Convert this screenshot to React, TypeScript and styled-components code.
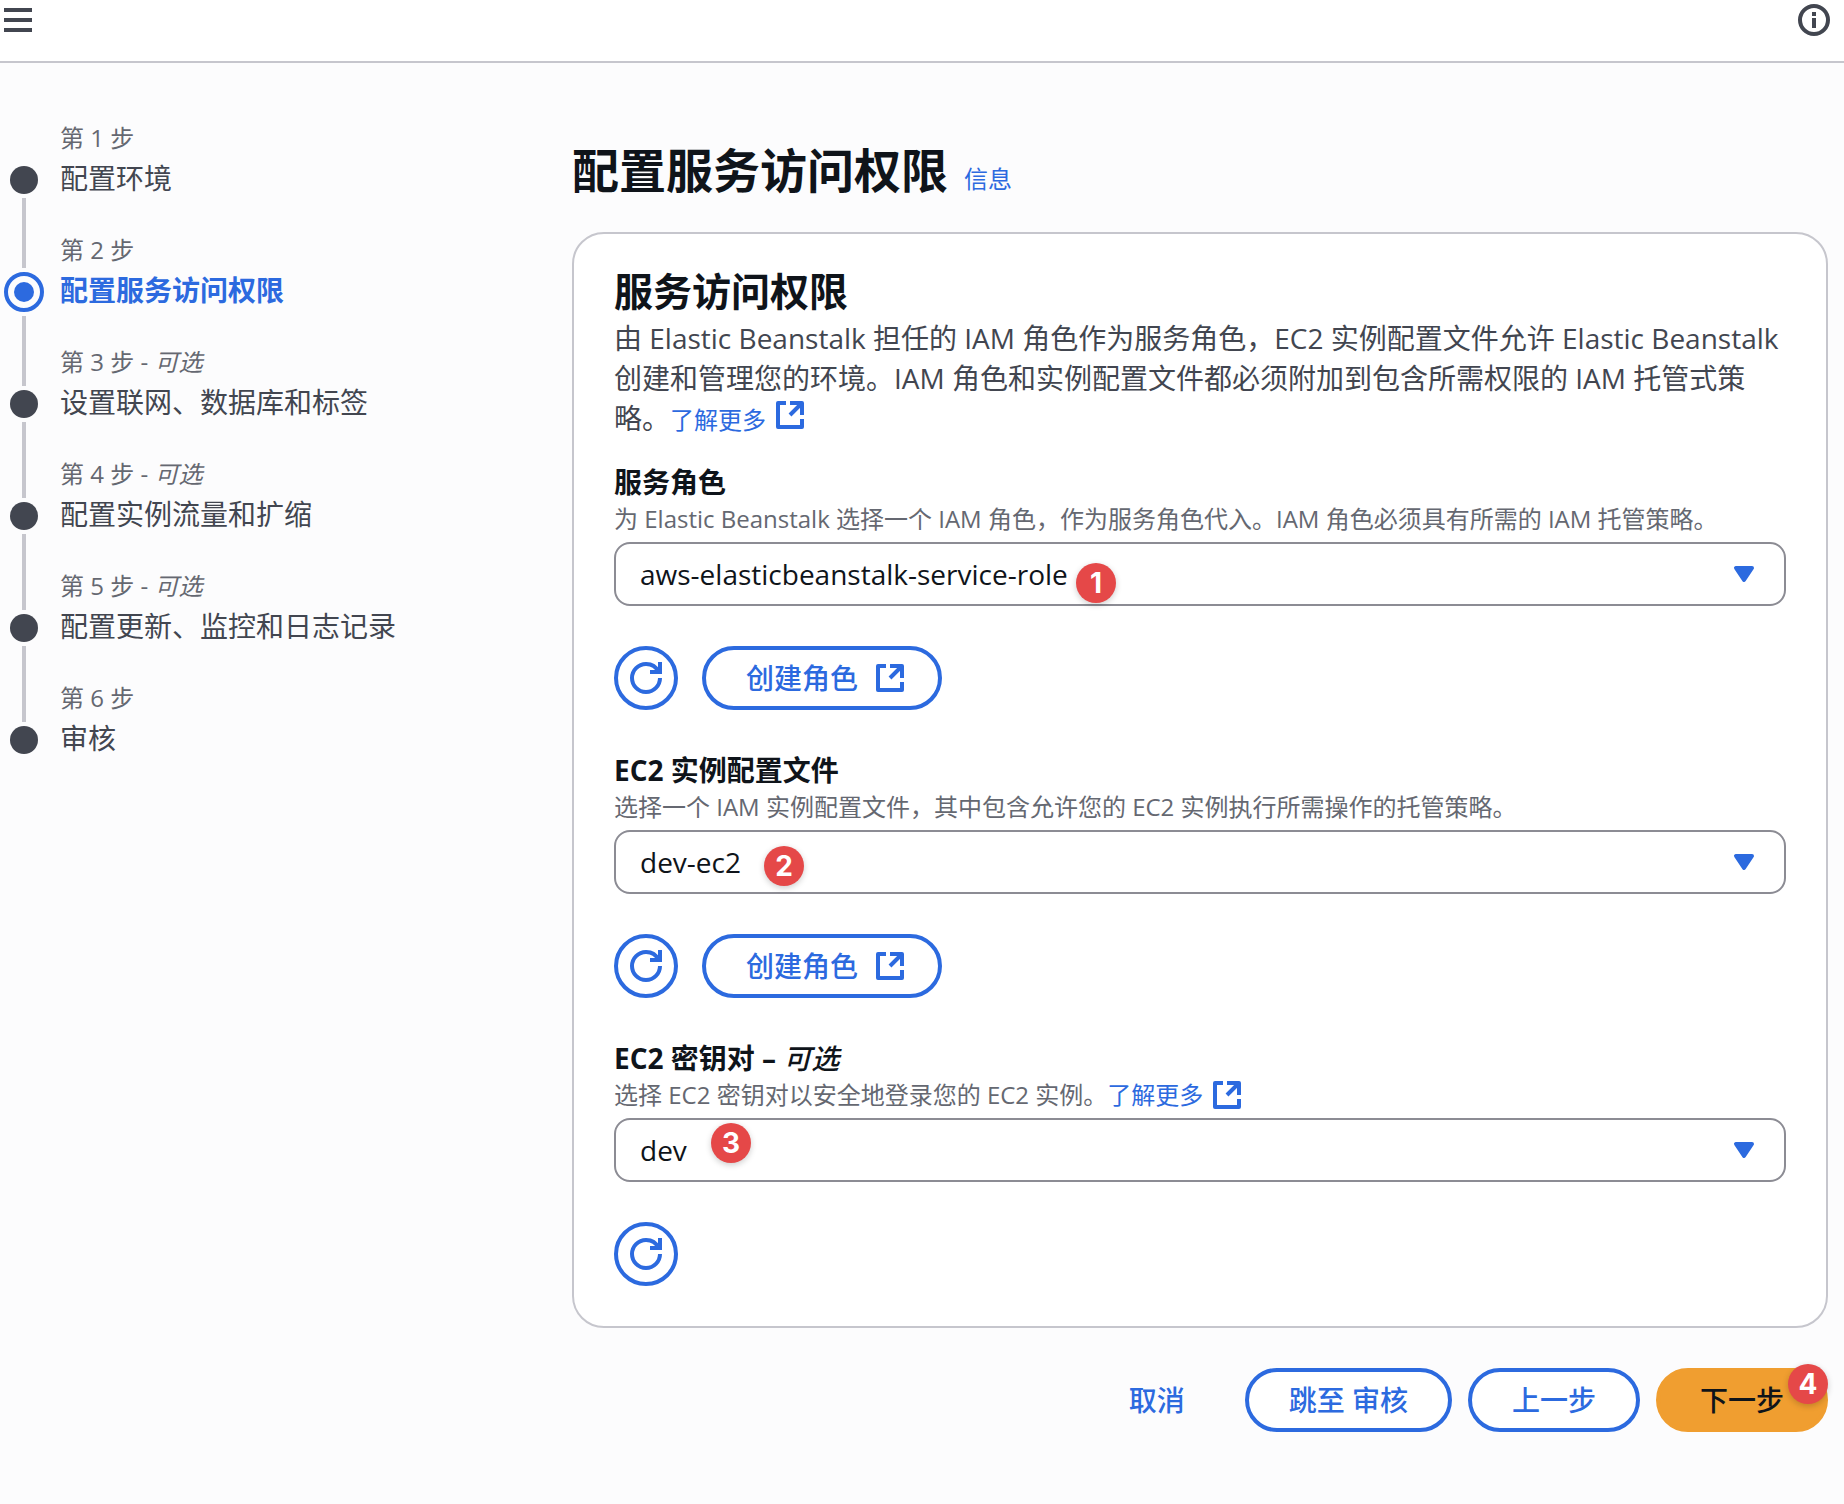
import React from "react";
import styled, { createGlobalStyle, css } from "styled-components";

const color = {
  page: "#fcfcfd",
  surface: "#ffffff",
  divider: "#c6c6cd",
  inputBorder: "#8c8c94",
  heading: "#0f141a",
  body: "#424650",
  muted: "#656871",
  link: "#2c6adf",
  primary: "#f09e30",
  badge: "#e54848",
};

const GlobalStyle = createGlobalStyle`
  *, *::before, *::after { box-sizing: border-box; }
  body {
    margin: 0;
    background: ${color.page};
    color: ${color.body};
    font-family: "Open Sans", "Noto Sans CJK SC", sans-serif;
    font-size: 28px;
    line-height: 40px;
  }
  h1, h2, p, ol { margin: 0; padding: 0; }
  a { color: ${color.link}; text-decoration: none; }
  button, select { font: inherit; cursor: pointer; }
  svg { display: block; flex: none; overflow: visible; }
`;

const TopBar = styled.header`
  display: flex;
  justify-content: space-between;
  align-items: flex-start;
  min-height: 63px;
  padding: 4px 14px 4px 2px;
  background: ${color.surface};
  border-bottom: 2px solid ${color.divider};
`;

const BareButton = styled.button`
  padding: 0;
  border: 0;
  background: none;
  color: ${color.body};
`;

const Layout = styled.div`
  display: grid;
  grid-template-columns: 568px minmax(0, 1fr);
  padding: 0 16px 72px 4px;

  @media (max-width: 1200px) {
    grid-template-columns: minmax(0, 1fr);
  }
`;

const StepNav = styled.nav`
  padding-top: 55px;
`;

const StepList = styled.ol`
  list-style: none;
`;

const StepItem = styled.li`
  display: grid;
  grid-template-columns: 40px minmax(0, 1fr);
  column-gap: 16px;
`;

const Rail = styled.div`
  display: flex;
  flex-direction: column;
  align-items: center;
  gap: 4px;
`;

const RailLine = styled.span<{ $height?: number; $hidden?: boolean }>`
  width: 4px;
  ${(p) => (p.$height ? `height: ${p.$height}px;` : "flex: 1;")}
  background: ${(p) => (p.$hidden ? "transparent" : color.divider)};
`;

const Marker = styled.span<{ $active?: boolean }>`
  border-radius: 50%;
  ${(p) =>
    p.$active
      ? css`
          width: 40px;
          height: 40px;
          padding: 6px;
          border: 4px solid ${color.link};
          background: ${color.link} content-box;
        `
      : css`
          width: 28px;
          height: 28px;
          background: ${color.body};
        `}
`;

const StepText = styled.div<{ $last?: boolean }>`
  padding-bottom: ${(p) => (p.$last ? 0 : 32)}px;
`;

const StepNumber = styled.div`
  font-size: 24px;
  color: ${color.muted};
`;

const StepTitle = styled.a<{ $active?: boolean }>`
  display: block;
  color: ${(p) => (p.$active ? color.link : color.body)};
  font-weight: ${(p) => (p.$active ? 700 : 400)};
`;

const Main = styled.main`
  padding-top: 79px;
`;

const PageHeader = styled.div`
  display: flex;
  align-items: baseline;
  gap: 16px;
  margin-bottom: 34px;
`;

const PageTitle = styled.h1`
  font-size: 47px;
  line-height: 56px;
  color: ${color.heading};
`;

const SmallLink = styled.a`
  font-size: 24px;
  line-height: 24px;
  white-space: nowrap;

  svg {
    display: inline-block;
    margin: -8px 0 -8px 8px;
    vertical-align: 1px;
  }
`;

const Card = styled.section`
  padding: 30px 40px 40px;
  background: ${color.surface};
  border: 2px solid ${color.divider};
  border-radius: 32px;
`;

const CardTitle = styled.h2`
  font-size: 39px;
  line-height: 54px;
  color: ${color.heading};
`;

const CardDescription = styled.p`
  svg {
    vertical-align: 6px;
  }
`;

const Fields = styled.div`
  display: flex;
  flex-direction: column;
  gap: 40px;
  margin-top: 24px;
`;

const FieldLabel = styled.label`
  display: block;
  font-weight: 700;
  color: ${color.heading};

  em {
    font-weight: 500;
  }
`;

const FieldHint = styled.p`
  margin-bottom: 6px;
  font-size: 24px;
  line-height: 34px;
  color: ${color.muted};
`;

const SelectBox = styled.div`
  position: relative;
  display: grid;
  align-items: center;

  > select,
  > svg {
    grid-area: 1 / 1;
  }

  > svg {
    justify-self: end;
    margin-right: 26px;
    color: ${color.link};
    pointer-events: none;
  }
`;

const Select = styled.select`
  width: 100%;
  height: 64px;
  padding: 0 64px 0 24px;
  appearance: none;
  border: 2px solid ${color.inputBorder};
  border-radius: 16px;
  background: ${color.surface};
  color: ${color.heading};
`;

const Actions = styled.div`
  display: flex;
  gap: 24px;
  margin-top: 40px;
`;

const Button = styled.button<{ $variant?: "normal" | "link" | "primary"; $icon?: boolean }>`
  position: relative;
  display: inline-flex;
  align-items: center;
  gap: 16px;
  height: 64px;
  padding: 0 ${(p) => (p.$icon ? 32 : 40)}px 0 40px;
  border: 4px solid ${color.link};
  border-radius: 32px;
  background: ${color.surface};
  color: ${color.link};
  font-weight: 500;
  white-space: nowrap;
  ${(p) => p.$variant === "link" && "border-color: transparent; background: transparent;"}
  ${(p) =>
    p.$variant === "primary" &&
    `border-color: ${color.primary}; background: ${color.primary}; color: ${color.heading};`}
`;

const RoundButton = styled(Button)`
  justify-content: center;
  width: 64px;
  padding: 0;
`;

const Footer = styled.div`
  display: flex;
  flex-wrap: wrap;
  justify-content: flex-end;
  gap: 16px;
  margin-top: 40px;
`;

const Badge = styled.span<{ $left?: number; $right?: number; $top: number }>`
  position: absolute;
  top: ${(p) => p.$top}px;
  ${(p) => (p.$left !== undefined ? `left: ${p.$left}px;` : `right: ${p.$right}px;`)}
  width: 40px;
  height: 40px;
  border-radius: 50%;
  background: ${color.badge};
  box-shadow: 0 2px 6px rgba(0, 0, 0, 0.2);
  color: #fff;
  font-family: Inter, sans-serif;
  font-size: 28px;
  font-weight: 700;
  line-height: 40px;
  text-align: center;
  pointer-events: none;
`;

const iconProps = {
  width: 32,
  height: 32,
  viewBox: "0 0 16 16",
  fill: "none",
  stroke: "currentColor",
  strokeWidth: 2,
  "aria-hidden": true,
} as const;

const MenuIcon = () => (
  <svg {...iconProps}>
    <path d="M1 3h14M1 8h14M1 13h14" />
  </svg>
);

const InfoIcon = () => (
  <svg {...iconProps}>
    <circle cx="8" cy="8" r="7" />
    <path d="M8 4v2M8 7v5" />
  </svg>
);

const ExternalIcon = () => (
  <svg {...iconProps} strokeLinejoin="round">
    <path d="M8 2h6v6M8 8l6-6M14 10v4H2V2h4" />
  </svg>
);

const RefreshIcon = () => (
  <svg {...iconProps}>
    <path d="M10 5h5V0" />
    <path
      d="M15 8a7 7 0 0 1-7 7 7 7 0 0 1-7-7 7 7 0 0 1 7-7 6.87 6.87 0 0 1 6.3 4"
      strokeLinejoin="round"
    />
  </svg>
);

const CaretIcon = () => (
  <svg {...iconProps} fill="currentColor" strokeLinejoin="round">
    <path d="M4 5h8l-4 6z" />
  </svg>
);

const steps = [
  { title: "配置环境" },
  { title: "配置服务访问权限", active: true },
  { title: "设置联网、数据库和标签", optional: true },
  { title: "配置实例流量和扩缩", optional: true },
  { title: "配置更新、监控和日志记录", optional: true },
  { title: "审核" },
];

function Steps() {
  return (
    <StepNav aria-label="步骤">
      <StepList>
        {steps.map((step, i) => {
          const last = i === steps.length - 1;
          return (
            <StepItem key={step.title}>
              <Rail>
                <RailLine $height={step.active ? 38 : 44} $hidden={i === 0} />
                <Marker $active={step.active} />
                <RailLine $hidden={last} />
              </Rail>
              <StepText $last={last}>
                <StepNumber>
                  第 {i + 1} 步{step.optional && <> - <em>可选</em></>}
                </StepNumber>
                <StepTitle
                  href="#"
                  $active={step.active}
                  aria-current={step.active ? "step" : undefined}
                >
                  {step.title}
                </StepTitle>
              </StepText>
            </StepItem>
          );
        })}
      </StepList>
    </StepNav>
  );
}

type FieldProps = {
  id: string;
  label: React.ReactNode;
  hint: React.ReactNode;
  value: string;
  badge: { text: string; left: number; top: number };
  canCreate?: boolean;
};

function Field({ id, label, hint, value, badge, canCreate }: FieldProps) {
  return (
    <div>
      <FieldLabel htmlFor={id}>{label}</FieldLabel>
      <FieldHint>{hint}</FieldHint>
      <SelectBox>
        <Select id={id} defaultValue={value}>
          <option>{value}</option>
        </Select>
        <CaretIcon />
        <Badge $left={badge.left} $top={badge.top}>
          {badge.text}
        </Badge>
      </SelectBox>
      <Actions>
        <RoundButton type="button" aria-label="刷新">
          <RefreshIcon />
        </RoundButton>
        {canCreate && (
          <Button type="button" $icon>
            创建角色
            <ExternalIcon />
          </Button>
        )}
      </Actions>
    </div>
  );
}

const LearnMore = () => (
  <SmallLink href="#">
    了解更多
    <ExternalIcon />
  </SmallLink>
);

export default function App() {
  return (
    <>
      <GlobalStyle />
      <TopBar>
        <BareButton type="button" aria-label="菜单">
          <MenuIcon />
        </BareButton>
        <BareButton type="button" aria-label="信息">
          <InfoIcon />
        </BareButton>
      </TopBar>
      <Layout>
        <Steps />
        <Main>
          <PageHeader>
            <PageTitle>配置服务访问权限</PageTitle>
            <SmallLink href="#">信息</SmallLink>
          </PageHeader>
          <Card>
            <CardTitle>服务访问权限</CardTitle>
            <CardDescription>
              由 Elastic Beanstalk 担任的 IAM 角色作为服务角色，EC2 实例配置文件允许 Elastic Beanstalk
              创建和管理您的环境。IAM 角色和实例配置文件都必须附加到包含所需权限的 IAM 托管式策略。
              <LearnMore />
            </CardDescription>
            <Fields>
              <Field
                id="service-role"
                label="服务角色"
                hint="为 Elastic Beanstalk 选择一个 IAM 角色，作为服务角色代入。IAM 角色必须具有所需的 IAM 托管策略。"
                value="aws-elasticbeanstalk-service-role"
                badge={{ text: "1", left: 462, top: 21 }}
                canCreate
              />
              <Field
                id="instance-profile"
                label="EC2 实例配置文件"
                hint="选择一个 IAM 实例配置文件，其中包含允许您的 EC2 实例执行所需操作的托管策略。"
                value="dev-ec2"
                badge={{ text: "2", left: 150, top: 16 }}
                canCreate
              />
              <Field
                id="key-pair"
                label={
                  <>
                    EC2 密钥对 – <em>可选</em>
                  </>
                }
                hint={
                  <>
                    选择 EC2 密钥对以安全地登录您的 EC2 实例。
                    <LearnMore />
                  </>
                }
                value="dev"
                badge={{ text: "3", left: 97, top: 5 }}
              />
            </Fields>
          </Card>
          <Footer>
            <Button type="button" $variant="link">
              取消
            </Button>
            <Button type="button">跳至 审核</Button>
            <Button type="button">上一步</Button>
            <Button type="button" $variant="primary">
              下一步
              <Badge $right={-4} $top={-8}>
                4
              </Badge>
            </Button>
          </Footer>
        </Main>
      </Layout>
    </>
  );
}
